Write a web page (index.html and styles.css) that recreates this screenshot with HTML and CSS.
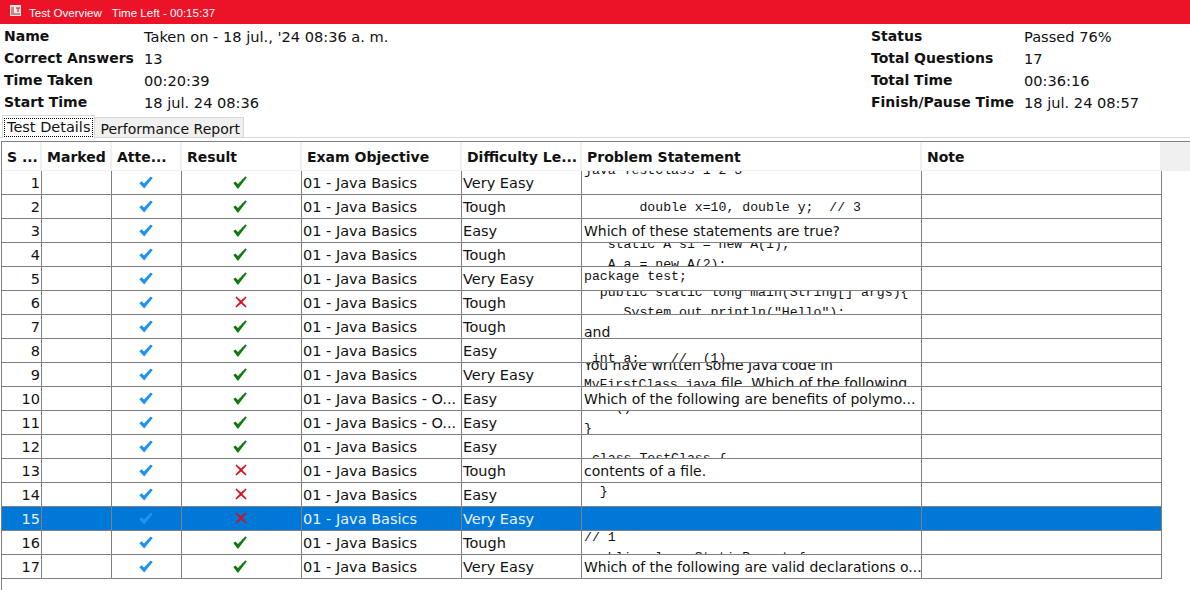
FILE: index.html
```html
<!DOCTYPE html>
<html lang="en">
<head>
    <meta charset="UTF-8">
    <title>Test Overview</title>
    <link rel="stylesheet" href="styles.css">
</head>
<body>
    <svg class="defs" width="0" height="0">
        <symbol id="tick-blue" viewBox="0 0 14 13"><path d="M0.3 7.2 L2.6 5.2 L5 7.6 L11.6 0.4 L13.7 2 L5.2 12.6 Z"/></symbol>
        <symbol id="tick-green" viewBox="0 0 14 13"><path d="M0.3 7 L2.4 5.6 L5 8 L12.4 0.3 L13.7 1.4 L5.4 12.6 L4.4 12.6 Z"/></symbol>
        <symbol id="cross-red" viewBox="0 0 12 12"><path d="M0.4 1.4 L1.4 0.4 L6 4.6 L10.6 0.4 L11.6 1.4 L7.3 6 L11.6 10.6 L10.6 11.6 L6 7.4 L1.4 11.6 L0.4 10.6 L4.7 6 Z"/></symbol>
    </svg>

    <div class="titlebar">
        <svg class="app-icon" width="11" height="11" viewBox="0 0 11 11">
            <rect width="11" height="11" fill="#f8e4e6"/>
            <path d="M1 3 H4 M1 5 H4 M1 7 H4 M6 3 H10 M8 3 V7 M1 9 H10" stroke="#a8202c" stroke-width="1" fill="none"/>
        </svg>
        <span>Test Overview</span>
        <span>Time Left - 00:15:37</span>
    </div>

    <div class="summary">
        <dl class="info">
            <dt>Name</dt><dd>Taken on - 18 jul., '24 08:36 a. m.</dd>
            <dt>Correct Answers</dt><dd>13</dd>
            <dt>Time Taken</dt><dd>00:20:39</dd>
            <dt>Start Time</dt><dd>18 jul. 24 08:36</dd>
        </dl>
        <dl class="info">
            <dt>Status</dt><dd>Passed 76%</dd>
            <dt>Total Questions</dt><dd>17</dd>
            <dt>Total Time</dt><dd>00:36:16</dd>
            <dt>Finish/Pause Time</dt><dd>18 jul. 24 08:57</dd>
        </dl>
    </div>

    <div class="tabs">
        <div class="tab active"><span class="focus">Test Details</span></div>
        <div class="tab">Performance Report</div>
    </div>

    <div class="grid">
        <div class="row head">
            <div class="cell">S ...</div>
            <div class="cell">Marked</div>
            <div class="cell">Atte...</div>
            <div class="cell">Result</div>
            <div class="cell">Exam Objective</div>
            <div class="cell">Difficulty Le...</div>
            <div class="cell">Problem Statement</div>
            <div class="cell">Note</div>
            <div class="head-fill"></div>
        </div>

        <div class="row">
            <div class="cell num">1</div><div class="cell"></div>
            <div class="cell icon"><svg class="tick blue"><use href="#tick-blue"/></svg></div>
            <div class="cell icon"><svg class="tick green"><use href="#tick-green"/></svg></div>
            <div class="cell">01 - Java Basics</div><div class="cell">Very Easy</div>
            <div class="cell stmt at-top"><pre class="code">java TestClass 1 2 3</pre></div>
            <div class="cell"></div>
        </div>
        <div class="row">
            <div class="cell num">2</div><div class="cell"></div>
            <div class="cell icon"><svg class="tick blue"><use href="#tick-blue"/></svg></div>
            <div class="cell icon"><svg class="tick green"><use href="#tick-green"/></svg></div>
            <div class="cell">01 - Java Basics</div><div class="cell">Tough</div>
            <div class="cell stmt"><pre class="code nudge-down">       double x=10, double y;  // 3</pre></div>
            <div class="cell"></div>
        </div>
        <div class="row">
            <div class="cell num">3</div><div class="cell"></div>
            <div class="cell icon"><svg class="tick blue"><use href="#tick-blue"/></svg></div>
            <div class="cell icon"><svg class="tick green"><use href="#tick-green"/></svg></div>
            <div class="cell">01 - Java Basics</div><div class="cell">Easy</div>
            <div class="cell stmt">Which of these statements are true?</div>
            <div class="cell"></div>
        </div>
        <div class="row">
            <div class="cell num">4</div><div class="cell"></div>
            <div class="cell icon"><svg class="tick blue"><use href="#tick-blue"/></svg></div>
            <div class="cell icon"><svg class="tick green"><use href="#tick-green"/></svg></div>
            <div class="cell">01 - Java Basics</div><div class="cell">Tough</div>
            <div class="cell stmt"><pre class="code">   static A s1 = new A(1);
   A a = new A(2);</pre></div>
            <div class="cell"></div>
        </div>
        <div class="row">
            <div class="cell num">5</div><div class="cell"></div>
            <div class="cell icon"><svg class="tick blue"><use href="#tick-blue"/></svg></div>
            <div class="cell icon"><svg class="tick green"><use href="#tick-green"/></svg></div>
            <div class="cell">01 - Java Basics</div><div class="cell">Very Easy</div>
            <div class="cell stmt at-start"><pre class="code">package test;</pre></div>
            <div class="cell"></div>
        </div>
        <div class="row">
            <div class="cell num">6</div><div class="cell"></div>
            <div class="cell icon"><svg class="tick blue"><use href="#tick-blue"/></svg></div>
            <div class="cell icon"><svg class="cross"><use href="#cross-red"/></svg></div>
            <div class="cell">01 - Java Basics</div><div class="cell">Tough</div>
            <div class="cell stmt"><pre class="code">  public static long main(String[] args){
     System.out.println("Hello");</pre></div>
            <div class="cell"></div>
        </div>
        <div class="row">
            <div class="cell num">7</div><div class="cell"></div>
            <div class="cell icon"><svg class="tick blue"><use href="#tick-blue"/></svg></div>
            <div class="cell icon"><svg class="tick green"><use href="#tick-green"/></svg></div>
            <div class="cell">01 - Java Basics</div><div class="cell">Tough</div>
            <div class="cell stmt at-end low-text"><span class="low-word">and</span></div>
            <div class="cell"></div>
        </div>
        <div class="row">
            <div class="cell num">8</div><div class="cell"></div>
            <div class="cell icon"><svg class="tick blue"><use href="#tick-blue"/></svg></div>
            <div class="cell icon"><svg class="tick green"><use href="#tick-green"/></svg></div>
            <div class="cell">01 - Java Basics</div><div class="cell">Easy</div>
            <div class="cell stmt at-end"><pre class="code low-code"> int a;    //  (1)</pre></div>
            <div class="cell"></div>
        </div>
        <div class="row">
            <div class="cell num">9</div><div class="cell"></div>
            <div class="cell icon"><svg class="tick blue"><use href="#tick-blue"/></svg></div>
            <div class="cell icon"><svg class="tick green"><use href="#tick-green"/></svg></div>
            <div class="cell">01 - Java Basics</div><div class="cell">Very Easy</div>
            <div class="cell stmt"><div class="two-lines">You have written some Java code in<br><span class="mono">MyFirstClass.java</span> file. Which of the following</div></div>
            <div class="cell"></div>
        </div>
        <div class="row">
            <div class="cell num">10</div><div class="cell"></div>
            <div class="cell icon"><svg class="tick blue"><use href="#tick-blue"/></svg></div>
            <div class="cell icon"><svg class="tick green"><use href="#tick-green"/></svg></div>
            <div class="cell">01 - Java Basics - O...</div><div class="cell">Easy</div>
            <div class="cell stmt">Which of the following are benefits of polymo...</div>
            <div class="cell"></div>
        </div>
        <div class="row">
            <div class="cell num">11</div><div class="cell"></div>
            <div class="cell icon"><svg class="tick blue"><use href="#tick-blue"/></svg></div>
            <div class="cell icon"><svg class="tick green"><use href="#tick-green"/></svg></div>
            <div class="cell">01 - Java Basics - O...</div><div class="cell">Easy</div>
            <div class="cell stmt at-end"><pre class="code close-brace">    ()
}</pre></div>
            <div class="cell"></div>
        </div>
        <div class="row">
            <div class="cell num">12</div><div class="cell"></div>
            <div class="cell icon"><svg class="tick blue"><use href="#tick-blue"/></svg></div>
            <div class="cell icon"><svg class="tick green"><use href="#tick-green"/></svg></div>
            <div class="cell">01 - Java Basics</div><div class="cell">Easy</div>
            <div class="cell stmt past-end"><pre class="code"> class TestClass {</pre></div>
            <div class="cell"></div>
        </div>
        <div class="row">
            <div class="cell num">13</div><div class="cell"></div>
            <div class="cell icon"><svg class="tick blue"><use href="#tick-blue"/></svg></div>
            <div class="cell icon"><svg class="cross"><use href="#cross-red"/></svg></div>
            <div class="cell">01 - Java Basics</div><div class="cell">Tough</div>
            <div class="cell stmt">contents of a file.</div>
            <div class="cell"></div>
        </div>
        <div class="row">
            <div class="cell num">14</div><div class="cell"></div>
            <div class="cell icon"><svg class="tick blue"><use href="#tick-blue"/></svg></div>
            <div class="cell icon"><svg class="cross"><use href="#cross-red"/></svg></div>
            <div class="cell">01 - Java Basics</div><div class="cell">Easy</div>
            <div class="cell stmt at-start"><pre class="code nudge-up">  }</pre></div>
            <div class="cell"></div>
        </div>
        <div class="row selected">
            <div class="cell num">15</div><div class="cell"></div>
            <div class="cell icon"><svg class="tick blue"><use href="#tick-blue"/></svg></div>
            <div class="cell icon"><svg class="cross"><use href="#cross-red"/></svg></div>
            <div class="cell">01 - Java Basics</div><div class="cell">Very Easy</div>
            <div class="cell stmt"></div>
            <div class="cell"></div>
        </div>
        <div class="row">
            <div class="cell num">16</div><div class="cell"></div>
            <div class="cell icon"><svg class="tick blue"><use href="#tick-blue"/></svg></div>
            <div class="cell icon"><svg class="tick green"><use href="#tick-green"/></svg></div>
            <div class="cell">01 - Java Basics</div><div class="cell">Tough</div>
            <div class="cell stmt at-start"><pre class="code high-code">// 1
 public class StaticParent {</pre></div>
            <div class="cell"></div>
        </div>
        <div class="row">
            <div class="cell num">17</div><div class="cell"></div>
            <div class="cell icon"><svg class="tick blue"><use href="#tick-blue"/></svg></div>
            <div class="cell icon"><svg class="tick green"><use href="#tick-green"/></svg></div>
            <div class="cell">01 - Java Basics</div><div class="cell">Very Easy</div>
            <div class="cell stmt">Which of the following are valid declarations o...</div>
            <div class="cell"></div>
        </div>
    </div>
</body>
</html>
```
FILE: styles.css
```css
html, body {
    height: 100%;
}

body {
    margin: 0;
    overflow: hidden;
    background-color: #fff;
    color: #111;
    font-family: "DejaVu Sans", sans-serif;
    font-size: 14px;
}

.defs {
    display: block;
    height: 0;
}

.titlebar {
    display: flex;
    align-items: center;
    gap: 10px;
    height: 24px;
    padding-left: 10px;
    background-color: #ec1328;
    color: #fff;
    font-family: "Liberation Sans", sans-serif;
    font-size: 11.6px;
}

.app-icon {
    margin: -4px -2px 0 0;
}

.summary {
    display: flex;
    justify-content: space-between;
    padding: 1px 0 0 4px;
}

.info {
    display: grid;
    grid-template-columns: 140px auto;
    grid-auto-rows: 22px;
    align-items: center;
    margin: 0;
    width: 400px;
}

.info + .info {
    grid-template-columns: 153px auto;
    width: 319px;
}

.info dt {
    font-weight: bold;
}

.info dd {
    margin: 0;
    font-size: 14.6px;
}

.tabs {
    display: flex;
    align-items: flex-end;
    height: 23px;
    padding: 1px 0 0 2px;
    border-bottom: 1px solid #d9d9d9;
}

.tab {
    display: flex;
    align-items: center;
    height: 20px;
    padding: 2px 3px 0 5px;
    margin-left: -1px;
    background-color: #f0f0f0;
    border: 1px solid #d9d9d9;
    border-bottom: 0;
    box-sizing: border-box;
}

.tab.active {
    height: 23px;
    margin: 0 0 -1px;
    padding: 0 1px;
    background-color: #fff;
    font-size: 14.5px;
}

.focus {
    display: block;
    padding: 0 2px 1px;
    border: 1px dotted #000;
}

.grid {
    margin: 3px 0 0 1px;
    height: 449px;
    border-left: 1px solid #808080;
    border-top: 1px solid #808080;
}

.row {
    display: grid;
    grid-template-columns: 40px 70px 70px 120px 160px 120px 340px 240px;
    height: 24px;
    box-sizing: border-box;
    width: 1160px;
    border-bottom: 1px solid #808080;
    font-size: 14.5px;
}

.row .cell {
    display: flex;
    align-items: center;
    overflow: hidden;
    padding: 1px 1px 0;
    border-right: 1px solid #808080;
    white-space: nowrap;
    min-width: 0;
    box-sizing: border-box;
}

.row.head {
    grid-template-columns: 40px 70px 70px 120px 160px 120px 340px 240px 1fr;
    height: 29px;
    width: auto;
    border-bottom: 1px solid #f0f0f0;
    font-size: 14px;
    font-weight: bold;
}

.row.head .cell {
    padding: 1px 5px 0;
    border-right: 2px solid #f0f0f0;
}

.head-fill {
    background-color: #f0f0f0;
}

.row .num {
    justify-content: flex-end;
}

.row .icon {
    justify-content: center;
}

.row .stmt {
    padding: 0 0 0 2px;
    font-size: 14px;
}

.stmt.at-start {
    align-items: flex-start;
}

.stmt.at-end {
    align-items: flex-end;
}

.low-word {
    margin-bottom: -2px;
}

.stmt.at-top .code {
    margin-top: -23px;
}

.stmt.past-end .code {
    margin-top: 25px;
}

.code {
    margin: 0;
    font-family: "Liberation Mono", monospace;
    font-size: 13.2px;
    line-height: 20px;
}

.nudge-down {
    margin-top: 2px;
}

.nudge-up {
    margin-top: -1px;
}

.low-code {
    margin-bottom: -7px;
}

.close-brace {
    margin-bottom: -5px;
    line-height: 21px;
}

.high-code {
    margin-top: -3px;
}

.mono {
    font-family: "Liberation Mono", monospace;
    font-size: 13px;
}

.two-lines {
    line-height: 18px;
}

.tick {
    width: 14px;
    height: 13px;
    margin-top: -1px;
}

.tick.blue {
    margin-right: 2px;
    fill: #1e96f0;
}

.tick.green {
    margin-right: 3px;
    fill: #0f7a12;
}

.cross {
    width: 12px;
    height: 12px;
    margin: -2px 1px 0 0;
    fill: #d8101e;
}

.row.selected {
    background-color: #0078d7;
    color: #e8f2fb;
}
```
